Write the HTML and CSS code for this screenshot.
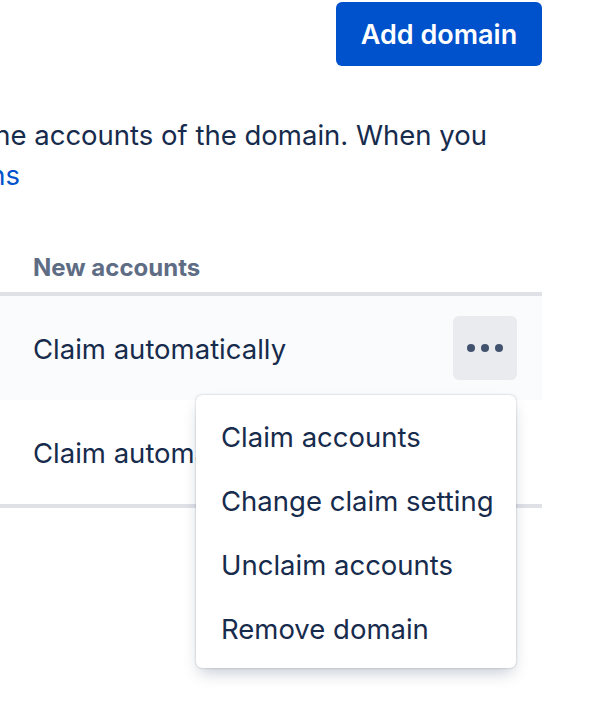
FILE: index.html
```html
<!DOCTYPE html>
<html lang="en">
<head>
<meta charset="utf-8">
<title>Domains</title>
<link rel="stylesheet" href="styles.css">
</head>
<body>
<div class="page">
  <div class="top">
    <button class="primary">Add domain</button>
  </div>
  <p class="intro">
    <span class="line l1">claim the accounts of the domain. When you</span>
    <span class="line l2"><a href="#" class="link">About domains</a></span>
  </p>
  <div class="table">
    <div class="thead">
      <div class="cell dom"></div>
      <div class="cell">New accounts</div>
      <div class="cell act"></div>
    </div>
    <div class="row hovered">
      <div class="cell dom"></div>
      <div class="cell">Claim automatically</div>
      <div class="cell act">
        <button class="more" aria-label="More">
          <svg width="48" height="48" viewBox="0 0 24 24"><circle cx="5" cy="12" r="2"/><circle cx="12" cy="12" r="2"/><circle cx="19" cy="12" r="2"/></svg>
        </button>
        <div class="menu">
          <div class="item">Claim accounts</div>
          <div class="item">Change claim setting</div>
          <div class="item">Unclaim accounts</div>
          <div class="item">Remove domain</div>
        </div>
      </div>
    </div>
    <div class="row">
      <div class="cell dom"></div>
      <div class="cell">Claim automatically</div>
      <div class="cell act"></div>
    </div>
  </div>
</div>
</body>
</html>
```
FILE: styles.css
```css
html, body {
  margin: 0;
  padding: 0;
  background: #fff;
}
body {
  min-height: 716px;
  font-family: Inter, "Noto Sans", sans-serif;
  color: #172B4D;
  font-size: 27.5px;
}
.page {
  margin-left: -317px;
  width: 859px;
  padding-top: 2px;
}
.top {
  display: flex;
  justify-content: flex-end;
}
.primary {
  height: 64px;
  width: 206px;
  border: none;
  border-radius: 6px;
  background: #0052CC;
  color: #fff;
  font-family: inherit;
  font-size: 27px;
  font-weight: 600;
  padding: 0;
}
.intro {
  margin: 49px 0 0;
  line-height: 40px;
}
.line {
  display: block;
  white-space: nowrap;
  text-align: right;
}
.l1 {
  margin-right: 55px;
}
.l2 {
  margin-right: 522px;
}
.link {
  color: #0052CC;
  text-decoration: none;
}
.table {
  margin-top: 57px;
  border-bottom: 4px solid #DFE1E6;
}
.thead, .row {
  display: grid;
  grid-template-columns: 317px 1fr 90px;
  align-items: center;
}
.thead {
  border-bottom: 4px solid #DFE1E6;
  padding: 0 0 8px;
  font-weight: 700;
  color: #5E6C84;
  font-size: 24px;
  line-height: 32px;
}
.row {
  height: 104px;
}
.row .cell:nth-child(2) {
  padding-top: 2px;
}
.hovered {
  background: #FAFBFC;
}
.cell {
  padding-left: 33px;
}
.act {
  position: relative;
  padding: 0 25px 0 0;
  display: flex;
  justify-content: flex-end;
}
.more {
  width: 64px;
  height: 64px;
  border: none;
  border-radius: 6px;
  background: #E9EBEE;
  padding: 8px;
  display: flex;
  align-items: center;
  justify-content: center;
}
.more svg {
  fill: #42526E;
  display: block;
}
.menu {
  position: absolute;
  top: 79px;
  right: 26px;
  width: 320px;
  background: #fff;
  border-radius: 6px;
  padding: 10px 0 7px;
  box-shadow: 0 8px 16px -4px rgba(9, 30, 66, 0.25), 0 0 2px rgba(9, 30, 66, 0.31);
  z-index: 2;
}
.item {
  height: 64px;
  display: flex;
  align-items: center;
  padding-left: 25px;
  white-space: nowrap;
}
```
